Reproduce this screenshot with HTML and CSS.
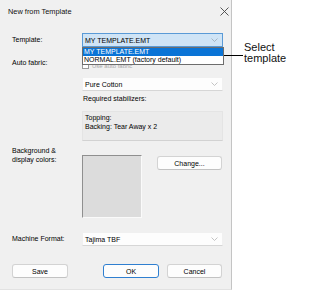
FILE: index.html
```html
<!DOCTYPE html>
<html>
<head>
<meta charset="utf-8">
<link rel="stylesheet" href="styles.css">
</head>
<body>
<div class="dialog">
  <div class="titlebar">
    <span class="title">New from Template</span>
    <svg class="close" width="9" height="9" viewBox="0 0 9 9"><path d="M0.5 0.5 L8.5 8.5 M8.5 0.5 L0.5 8.5" stroke="#444" stroke-width="0.9" fill="none"/></svg>
  </div>
  <div class="form">
    <div class="row r-template">
      <div class="label">Template:</div>
      <div class="content">
        <div class="combo active"><span>MY TEMPLATE.EMT</span><svg class="chev" width="7" height="4" viewBox="0 0 7 4"><path d="M0.5 0.5 L3.5 3.5 L6.5 0.5" stroke="#9aa9b8" stroke-width="0.8" fill="none"/></svg></div>
        <div class="droplist">
          <div class="item sel">MY TEMPLATE.EMT</div>
          <div class="item">NORMAL.EMT (factory default)</div>
        </div>
      </div>
    </div>
    <div class="row r-fabric">
      <div class="label">Auto fabric:</div>
      <div class="content">
        <div class="check"><span class="box"></span><span class="ctxt">Use auto fabric</span></div>
        <div class="combo"><span>Pure Cotton</span><svg class="chev" width="7" height="4" viewBox="0 0 7 4"><path d="M0.5 0.5 L3.5 3.5 L6.5 0.5" stroke="#b5b5b5" stroke-width="0.8" fill="none"/></svg></div>
        <div class="sublabel">Required stabilizers:</div>
        <div class="stab">Topping:<br>Backing: Tear Away x 2</div>
      </div>
    </div>
    <div class="row r-colors">
      <div class="label">Background &amp;<br>display colors:</div>
      <div class="content colors">
        <div class="swatch"></div>
        <button class="btn change">Change...</button>
      </div>
    </div>
    <div class="row r-machine">
      <div class="label">Machine Format:</div>
      <div class="content">
        <div class="combo"><span>Tajima TBF</span><svg class="chev" width="7" height="4" viewBox="0 0 7 4"><path d="M0.5 0.5 L3.5 3.5 L6.5 0.5" stroke="#b5b5b5" stroke-width="0.8" fill="none"/></svg></div>
      </div>
    </div>
    <div class="buttons">
      <button class="btn">Save</button>
      <button class="btn ok">OK</button>
      <button class="btn">Cancel</button>
    </div>
  </div>
</div>
<div class="callout">
  <span class="line"></span>
  <span class="ctext">Select<br>template</span>
</div>
</body>
</html>
```

FILE: styles.css
```css
html, body {
  margin: 0;
  padding: 0;
  background: #ffffff;
}
body {
  width: 325px;
  height: 300px;
  position: relative;
  font-family: "Liberation Sans", Arial, sans-serif;
  font-size: 7px;
  color: #000;
}
.dialog {
  width: 231px;
  height: 289px;
  background: #f0f0f0;
  border-right: 1px solid #c4c4c4;
  border-bottom: 1px solid #e2e2e2;
  position: relative;
}
.titlebar {
  height: 22px;
  display: flex;
  align-items: center;
  justify-content: space-between;
  padding: 0 2px 0 8px;
}
.title {
  font-size: 7.4px;
  color: #111;
}
.close {
  display: block;
}
.form {
  padding: 11px 8px 0 12px;
}
.row {
  display: flex;
}
.label {
  width: 70px;
  flex: none;
  line-height: 9px;
}
.content {
  width: 142px;
  position: relative;
}
.r-template .label {
  line-height: 14px;
}
.combo {
  height: 14px;
  box-sizing: border-box;
  background: #fdfdfd;
  border: 1px solid #f0f0f0;
  border-bottom-color: #d6d6d6;
  display: flex;
  align-items: center;
  justify-content: space-between;
  padding: 0 4px 0 2px;
}
.combo.active {
  background: #cfe4f6;
  border: 1px solid #5a9ad6;
}
.chev {
  display: block;
}
.droplist {
  position: absolute;
  left: 0;
  top: 14px;
  width: 142px;
  box-sizing: border-box;
  border: 1px solid #6d6d6d;
  background: #fff;
  z-index: 2;
}
.item {
  height: 8px;
  line-height: 8px;
  padding-left: 1px;
  color: #000;
}
.item.sel {
  background: #0a74d6;
  color: #fff;
}
.r-fabric {
  margin-top: 10px;
}
.r-fabric .label {
  line-height: 11px;
}
.check {
  height: 12px;
  display: flex;
  align-items: flex-end;
  gap: 3px;
  color: #aaa;
  font-size: 6px;
  line-height: 6px;
}
.check .box {
  width: 7px;
  height: 7px;
  border: 1px solid #999;
  box-sizing: border-box;
  background: #fff;
}
.r-fabric .combo {
  margin-top: 8px;
}
.sublabel {
  margin-top: 3px;
  height: 10px;
  line-height: 10px;
  padding-left: 1px;
}
.stab {
  margin-top: 7px;
  height: 30px;
  box-sizing: border-box;
  background: #ebebeb;
  border: 1px solid #e4e4e4;
  border-bottom-color: #d2d2d2;
  padding: 1px 2px;
  line-height: 9px;
}
.r-colors {
  margin-top: 6px;
}
.r-colors .label {
  line-height: 8.5px;
}
.colors {
  display: flex;
  align-items: flex-start;
  padding-top: 8px;
}
.swatch {
  width: 60px;
  height: 63px;
  box-sizing: border-box;
  background: #dcdcdc;
  border: 1px solid #fafafa;
  border-top-color: #8f8f8f;
  border-left-color: #8f8f8f;
}
.btn {
  font-family: "Liberation Sans", Arial, sans-serif;
  font-size: 7px;
  color: #000;
  height: 14px;
  padding: 0;
  margin: 0;
  box-sizing: border-box;
  background: #fdfdfd;
  border: 1px solid #d3d3d3;
  border-bottom-color: #c2c2c2;
  border-radius: 3px;
}
.change {
  width: 65px;
  margin-left: 15px;
  margin-top: 1px;
}
.r-machine {
  margin-top: 14px;
}
.r-machine .label {
  line-height: 14px;
}
.buttons {
  margin-top: 18px;
  display: flex;
}
.buttons .btn {
  width: 56px;
}
.buttons .ok {
  margin-left: 35px;
  border: 1px solid #2f7fd0;
}
.buttons .btn:last-child {
  margin-left: 8px;
  width: 55px;
}
.callout {
  position: absolute;
  left: 222px;
  top: 42px;
  display: flex;
  align-items: flex-start;
}
.callout .line {
  width: 21px;
  height: 1px;
  background: #000;
  margin-top: 13px;
}
.ctext {
  font-family: "Liberation Sans", Arial, sans-serif;
  font-size: 11px;
  line-height: 10.5px;
  color: #111;
  margin-left: 1px;
}
```
